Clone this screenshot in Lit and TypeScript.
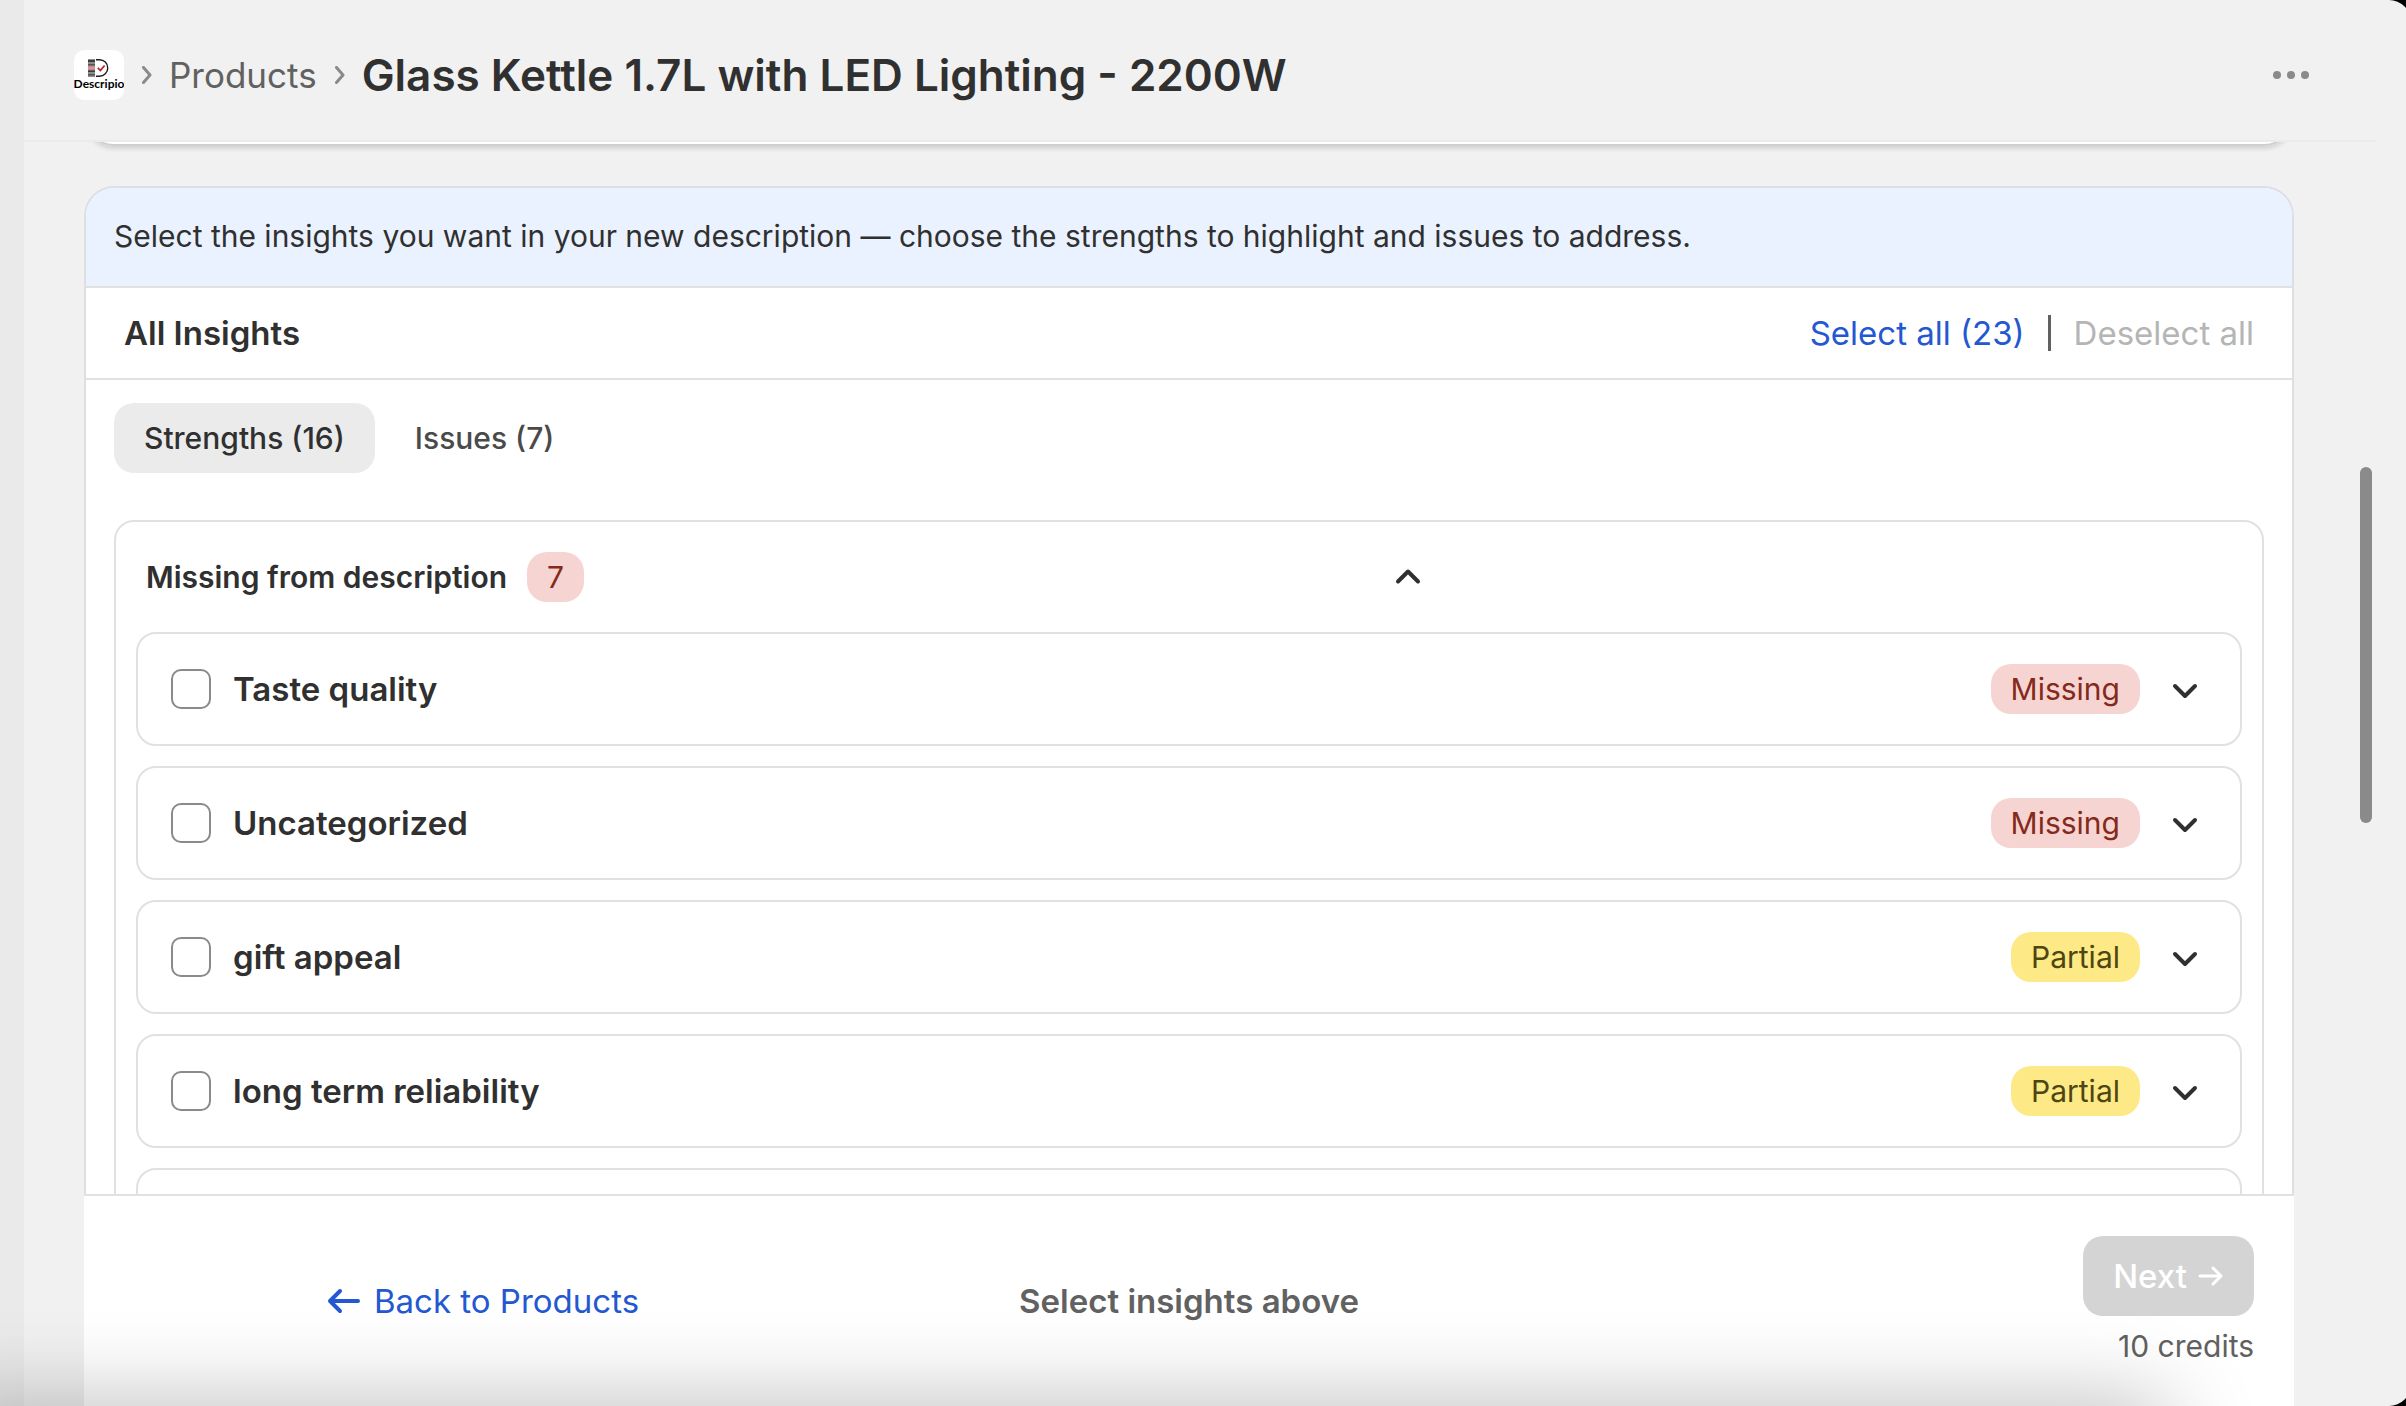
import { LitElement, html, css, svg } from "lit";
import { customElement, property, state } from "lit/decorators.js";

type Status = "Missing" | "Partial";
interface Insight {
  id: string;
  label: string;
  status: Status;
}

const INSIGHTS: Insight[] = [
  { id: "taste", label: "Taste quality", status: "Missing" },
  { id: "uncategorized", label: "Uncategorized", status: "Missing" },
  { id: "gift", label: "gift appeal", status: "Partial" },
  { id: "reliability", label: "long term reliability", status: "Partial" },
];

const logo = svg`
  <svg viewBox="0 0 50 50" width="50" height="50" role="img" aria-label="Descripio">
    <rect width="50" height="50" rx="10" fill="#fff" />
    <g>
      <rect x="14" y="9" width="7" height="18" fill="#8c8c8c" />
      <rect x="14" y="10" width="7" height="2" fill="#3c3c3c" />
      <rect x="14" y="14" width="7" height="1.5" fill="#555" />
      <rect x="14" y="16.5" width="7" height="3" fill="#e59090" />
      <rect x="14" y="20.5" width="7" height="1.5" fill="#3c3c3c" />
      <rect x="14" y="24" width="7" height="1.5" fill="#555" />
    </g>
    <path d="M22 9.700h3.500a8.200 8.200 0 0 1 0 16.500H22" fill="none" stroke="#1b1b1b" stroke-width="1.4" />
    <path d="M23.800 17.800l2.600 2.700 4.200-5" fill="none" stroke="#b3262b" stroke-width="1.8" />
    <text x="25" y="38" text-anchor="middle" font-family="Lato, sans-serif" font-weight="700" font-size="12" fill="#000">Descripio</text>
  </svg>
`;

const crumbArrow = svg`
  <svg viewBox="0 0 10 18" width="10" height="18" aria-hidden="true">
    <path d="M1.500 1.500L8 9l-6.500 7.500" fill="none" stroke="#8a8a8a" stroke-width="3" stroke-linecap="round" stroke-linejoin="round" />
  </svg>
`;

const chevron = (up: boolean) => svg`
  <svg viewBox="0 0 50 50" width="50" height="50" aria-hidden="true">
    <path d=${up ? "M15 29.500L25 19.500 35 29.500" : "M15 22L25 32 35 22"} fill="none" stroke="#303030" stroke-width="4" stroke-linecap="round" stroke-linejoin="round" />
  </svg>
`;

@customElement("insight-row")
export class InsightRow extends LitElement {
  @property({ attribute: false }) insight!: Insight;
  @property({ type: Boolean }) checked = false;

  static styles = css`
    :host {
      display: flex;
      align-items: center;
      height: 114px;
      box-sizing: border-box;
      padding: 0 30px 0 33px;
      border: 2px solid #e1e1e1;
      border-radius: 20px;
    }
    .pick {
      display: flex;
      align-items: center;
      gap: 22px;
      flex: 1;
      font-size: 33px;
      font-weight: 600;
      line-height: 50px;
    }
    .box {
      appearance: none;
      width: 40px;
      height: 40px;
      margin: 0;
      border: 2px solid #8a8a8a;
      border-radius: 10px;
      background: #fff;
    }
    .box:checked {
      background: #303030;
      border-color: #303030;
    }
    .badge {
      padding: 0 20px;
      border-radius: 20px;
      font-size: 30px;
      line-height: 50px;
    }
    .missing {
      background: #f6d4d2;
      color: #842a1a;
    }
    .partial {
      background: #fde986;
      color: #4d4610;
    }
    .toggle {
      display: flex;
      margin-left: 20px;
      padding: 0;
      border: 0;
      background: none;
    }
  `;

  private onChange(e: Event) {
    const selected = (e.target as HTMLInputElement).checked;
    this.dispatchEvent(new CustomEvent("pick", { detail: selected }));
  }

  render() {
    const { id, label, status } = this.insight;
    return html`
      <label class="pick" for=${id}>
        <input class="box" type="checkbox" id=${id} .checked=${this.checked} @change=${this.onChange} />
        ${label}
      </label>
      <span class="badge ${status.toLowerCase()}">${status}</span>
      <button class="toggle" type="button" aria-label="Show ${label}">${chevron(false)}</button>
    `;
  }
}

@customElement("app-root")
export class AppRoot extends LitElement {
  @state() private picked = new Set<string>();

  static styles = css`
    :host {
      display: block;
      height: 100vh;
      overflow: hidden;
      background: #000;
      color: #303030;
      font-family: Inter, "Liberation Sans", sans-serif;
      font-size: 33px;
      line-height: 50px;
    }
    * {
      box-sizing: border-box;
    }
    button {
      font: inherit;
      color: inherit;
      border: 0;
      padding: 0;
      background: none;
    }
    a {
      color: inherit;
      text-decoration: none;
    }
    h1,
    h2,
    p {
      margin: 0;
      font-size: inherit;
    }
    .window {
      position: relative;
      display: flex;
      height: 100%;
      margin-right: -5px;
      padding-right: 5px;
      overflow: hidden;
      border-radius: 0 22px 22px 0;
      background: #f1f1f1;
    }
    .rail {
      flex: 0 0 24px;
      background: #eaeaea;
    }
    .main {
      flex: 1;
      min-width: 0;
      display: flex;
      flex-direction: column;
    }
    .top {
      display: flex;
      align-items: center;
      flex: 0 0 142px;
      margin-right: 30px;
      padding: 10px 65px 0 50px;
      border-bottom: 2px solid #ebebeb;
    }
    .crumbs {
      display: flex;
      align-items: center;
      flex: 1;
    }
    .brand {
      display: flex;
      margin-right: 18px;
    }
    .crumb {
      margin: 0 18px 0 17px;
      font-size: 35px;
      color: #616161;
    }
    .title {
      margin-left: 17px;
      font-size: 44px;
      font-weight: 600;
    }
    .more {
      display: flex;
    }
    .scroll {
      flex: 1;
      min-height: 0;
      display: flex;
      flex-direction: column;
      padding: 0 112px 0 60px;
      overflow: hidden;
    }
    .previous {
      flex: 0 0 44px;
      overflow: hidden;
      margin: 0 -10px;
      padding: 0 10px;
    }
    .previous-end {
      height: 80px;
      margin-top: -76px;
      border-radius: 30px;
      background: #fff;
      box-shadow: inset 0 -2px 0 #cfcfcf, 0 3px 4px rgba(0, 0, 0, 0.12);
    }
    .card {
      flex: 1;
      min-height: 0;
      display: flex;
      flex-direction: column;
      overflow: hidden;
      border: 2px solid #dcdfe3;
      border-bottom: 0;
      border-radius: 30px 30px 0 0;
      background: #fff;
    }
    .hint {
      flex: none;
      padding: 23px 28px 25px;
      border-bottom: 2px solid #e1e1e1;
      background: #eaf2ff;
      font-size: 30px;
    }
    .all {
      flex: none;
      display: flex;
      align-items: center;
      justify-content: space-between;
      height: 92px;
      padding: 0 38px;
      border-bottom: 2px solid #e1e1e1;
    }
    .heading {
      font-weight: 600;
    }
    .actions {
      display: flex;
      align-items: center;
      gap: 23px;
    }
    .link {
      color: #2358d0;
    }
    .off {
      color: #b5b5b5;
    }
    .rule {
      width: 3px;
      height: 36px;
      background: #616161;
    }
    .body {
      padding: 23px 28px 0;
    }
    .tabs {
      display: flex;
      gap: 10px;
      margin-bottom: 47px;
    }
    .tab {
      padding: 10px 30px;
      border-radius: 20px;
      font-size: 30px;
      font-weight: 500;
      color: #4a4a4a;
    }
    .tab-on {
      background: #ebebeb;
      color: #303030;
    }
    .group {
      padding: 30px 20px;
      border: 2px solid #e1e1e1;
      border-radius: 20px;
    }
    .group-head {
      display: grid;
      grid-template-columns: 59fr 41fr;
      align-items: center;
      width: 100%;
      margin-bottom: 30px;
      padding-left: 10px;
      text-align: left;
    }
    .group-name {
      display: flex;
      align-items: center;
      gap: 20px;
      font-size: 30px;
      font-weight: 600;
    }
    .count {
      padding: 0 20px;
      border-radius: 20px;
      background: #f6d4d2;
      color: #842a1a;
      font-weight: 400;
    }
    .head-icon {
      display: flex;
    }
    .rows {
      display: grid;
      gap: 20px;
    }
    .pending {
      height: 114px;
      border: 2px solid #e1e1e1;
      border-radius: 20px;
    }
    .foot {
      flex: none;
      display: grid;
      grid-template-columns: repeat(3, 1fr);
      align-items: center;
      padding: 40px;
      border-top: 2px solid #e1e1e1;
      background: #fff;
    }
    .back {
      display: flex;
      align-items: center;
      justify-content: center;
      gap: 5px;
      color: #2358d0;
    }
    .status {
      text-align: center;
      font-weight: 600;
      color: #616161;
    }
    .go {
      display: flex;
      flex-direction: column;
      align-items: flex-end;
      gap: 10px;
      color: #616161;
      font-size: 30px;
      line-height: 40px;
    }
    .next {
      display: flex;
      align-items: center;
      gap: 11px;
      height: 80px;
      padding: 0 30px;
      border-radius: 20px;
      background: #d4d4d4;
      color: #fff;
      font-size: 33px;
      font-weight: 500;
    }
    .shade {
      position: absolute;
      left: -60px;
      right: 245px;
      bottom: -70px;
      height: 70px;
      box-shadow: 0 0 90px rgba(0, 0, 0, 0.3);
      pointer-events: none;
    }
    .thumb {
      position: absolute;
      right: 39px;
      top: 467px;
      width: 12px;
      height: 356px;
      border-radius: 6px;
      background: #8a8a8a;
    }
  `;

  private pick(id: string, on: boolean) {
    const next = new Set(this.picked);
    if (on) next.add(id);
    else next.delete(id);
    this.picked = next;
  }

  render() {
    return html`
      <div class="window">
        <div class="rail"></div>
        <div class="main">
          <header class="top">
            <nav class="crumbs" aria-label="Breadcrumb">
              <a class="brand" href="#home">${logo}</a>
              ${crumbArrow}
              <a class="crumb" href="#products">Products</a>
              ${crumbArrow}
              <h1 class="title">Glass Kettle 1.7L with LED Lighting - 2200W</h1>
            </nav>
            <button class="more" type="button" aria-label="More actions">
              <svg viewBox="0 0 40 10" width="40" height="10" aria-hidden="true" fill="#8a8a8a">
                <circle cx="6" cy="5" r="4" />
                <circle cx="20" cy="5" r="4" />
                <circle cx="34" cy="5" r="4" />
              </svg>
            </button>
          </header>
          <div class="scroll">
            <div class="previous"><div class="previous-end"></div></div>
            <section class="card">
              <p class="hint">
                Select the insights you want in your new description — choose the strengths to highlight and issues to address.
              </p>
              <div class="all">
                <h2 class="heading">All Insights</h2>
                <div class="actions">
                  <button class="link" type="button">Select all (23)</button>
                  <span class="rule"></span>
                  <button class="off" type="button" disabled>Deselect all</button>
                </div>
              </div>
              <div class="body">
                <div class="tabs" role="tablist">
                  <button class="tab tab-on" type="button" role="tab" aria-selected="true">Strengths (16)</button>
                  <button class="tab" type="button" role="tab" aria-selected="false">Issues (7)</button>
                </div>
                <div class="group">
                  <button class="group-head" type="button" aria-expanded="true">
                    <span class="group-name">Missing from description <span class="count">7</span></span>
                    <span class="head-icon">${chevron(true)}</span>
                  </button>
                  <div class="rows">
                    ${INSIGHTS.map(
                      (i) => html`<insight-row
                        .insight=${i}
                        .checked=${this.picked.has(i.id)}
                        @pick=${(e: CustomEvent<boolean>) => this.pick(i.id, e.detail)}
                      ></insight-row>`
                    )}
                    <div class="pending"></div>
                  </div>
                </div>
              </div>
            </section>
            <footer class="foot">
              <a class="back" href="#products">
                <svg viewBox="0 0 50 50" width="50" height="50" aria-hidden="true">
                  <path d="M39 25H11M21 15L11 25l10 10" fill="none" stroke="#2358d0" stroke-width="4" stroke-linecap="round" stroke-linejoin="round" />
                </svg>
                Back to Products
              </a>
              <p class="status">Select insights above</p>
              <div class="go">
                <button class="next" type="button" disabled>
                  Next
                  <svg viewBox="0 0 26 22" width="26" height="22" aria-hidden="true">
                    <path d="M2 11h21M15 3l8 8-8 8" fill="none" stroke="#fff" stroke-width="3" stroke-linecap="round" stroke-linejoin="round" />
                  </svg>
                </button>
                <span>10 credits</span>
              </div>
            </footer>
          </div>
        </div>
        <div class="thumb"></div>
        <div class="shade"></div>
      </div>
    `;
  }
}
